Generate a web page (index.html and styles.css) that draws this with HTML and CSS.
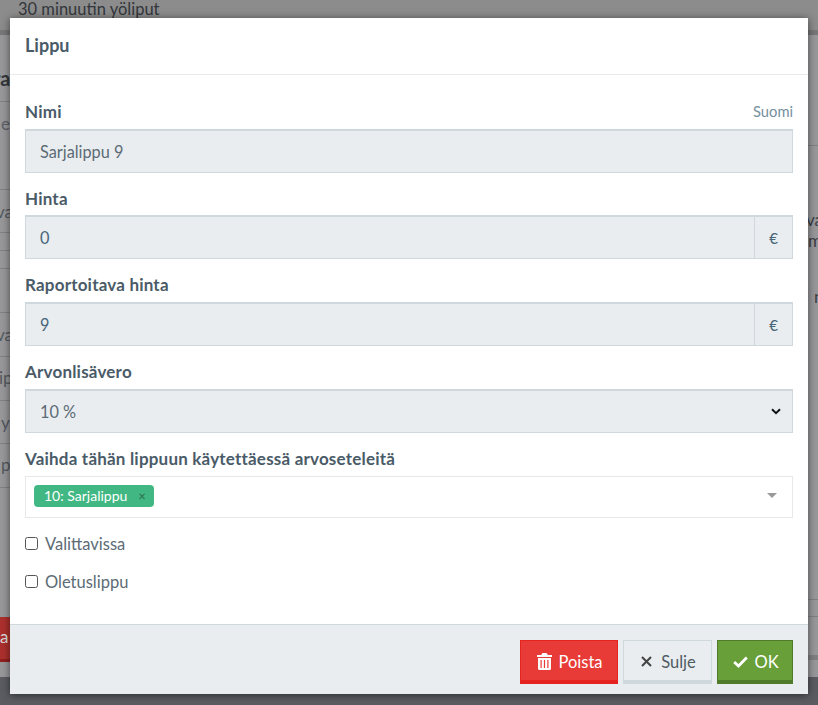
FILE: index.html
```html
<!DOCTYPE html>
<html lang="fi">
<head>
<meta charset="utf-8">
<title>Lippu</title>
<link rel="stylesheet" href="styles.css">
</head>
<body>
<div class="page">
  <div class="page-top">30 minuutin yöliput</div>
  <div class="page-sections">
    <div class="page-col">
      <div class="bg-row bg-h">ra</div>
      <div class="bg-row bg-e">e</div>
      <div class="bg-row bg-a">va</div>
      <div class="bg-row bg-b"></div>
      <div class="bg-row bg-c"></div>
      <div class="bg-row bg-g"></div>
      <div class="bg-row bg-a2">va</div>
      <div class="bg-row bg-p">ip</div>
      <div class="bg-row bg-y">y</div>
      <div class="bg-row bg-p2">p</div>
      <div class="bg-row bg-d"></div>
      <div class="bg-btn">a</div>
    </div>
    <div class="page-right">
      <div class="bg-r1"></div>
      <div class="bg-r2">
        <div class="bg-ra">va</div>
        <div class="bg-rm">m</div>
        <div class="bg-rn">n</div>
      </div>
      <div class="bg-r3"></div>
      <div class="bg-r4"></div>
    </div>
  </div>
</div>

<div class="modal">
  <div class="modal-header">Lippu</div>
  <div class="modal-body">
    <div class="field">
      <div class="label-row">
        <label class="label">Nimi</label>
        <span class="lang">Suomi</span>
      </div>
      <div class="input">Sarjalippu 9</div>
    </div>
    <div class="field">
      <label class="label">Hinta</label>
      <div class="input-group">
        <div class="input grow num">0</div>
        <div class="addon">€</div>
      </div>
    </div>
    <div class="field">
      <label class="label">Raportoitava hinta</label>
      <div class="input-group">
        <div class="input grow num">9</div>
        <div class="addon">€</div>
      </div>
    </div>
    <div class="field">
      <label class="label">Arvonlisävero</label>
      <div class="input select">
        <span>10 %</span>
        <svg class="chev" width="10" height="7" viewBox="0 0 10 7"><path d="M1 1.200 5 5.200 9 1.200" fill="none" stroke="#111" stroke-width="2"/></svg>
      </div>
    </div>
    <div class="field field-multi">
      <label class="label">Vaihda tähän lippuun käytettäessä arvoseteleitä</label>
      <div class="multi">
        <span class="tag">10: Sarjalippu<span class="tag-x">×</span></span>
        <span class="caret"></span>
      </div>
    </div>
    <label class="check"><span class="box"></span>Valittavissa</label>
    <label class="check"><span class="box"></span>Oletuslippu</label>
  </div>
  <div class="modal-footer">
    <button class="btn btn-red">
      <svg class="ico" width="15" height="17" viewBox="0 0 15 17"><path fill="#fff" fill-rule="evenodd" d="M5 0.500Q5.300 0 6 0h3q.7 0 1 .5L10.800 2H15v2H0V2h4.200zM1 5h13v10.500q0 1.500-1.500 1.500h-10Q1 17 1 15.500zM3.500 7v8h1.200V7zM6.900 7v8h1.200V7zM10.300 7v8h1.200V7z"/></svg>Poista
    </button>
    <button class="btn btn-light">
      <svg class="ico ico-x" width="11" height="11" viewBox="0 0 11 11"><path d="M1 1 10 10M10 1 1 10" stroke="#444" stroke-width="2" fill="none"/></svg>Sulje
    </button>
    <button class="btn btn-green">
      <svg class="ico" width="15" height="12" viewBox="0 0 15 12"><path d="M1.200 6 5.500 10 13.800 1.500" stroke="#fff" stroke-width="2.800" fill="none"/></svg>OK
    </button>
  </div>
</div>
</body>
</html>
```

FILE: styles.css
```css
* { box-sizing: border-box; }
html, body { margin: 0; height: 100%; }
body {
  width: 818px;
  height: 705px;
  overflow: hidden;
  position: relative;
  background: #5b5c62;
  font-family: "Lato", "Open Sans", sans-serif;
  color: #4a5b68;
}

/* dimmed page behind the dialog */
.page { height: 677px; display: flex; flex-direction: column; background: #8e8f92; color: #3a3e44; }
.page-top { height: 35px; padding-left: 18px; font-size: 16.500px; line-height: 18px; background: #8c8c8d; border-bottom: 5px solid #767779; color: #33373b; }
.page-sections { display: flex; justify-content: space-between; flex: 1; background: #98989b; }
.page-col { width: 40px; white-space: nowrap; }
.bg-row { border-bottom: 1px solid #808184; font-size: 17px; line-height: 20px; color: #54585e; text-indent: -4px; }
.bg-h { height: 67px; padding-top: 33px; font-weight: 700; font-size: 20px; color: #33373c; text-indent: -7px; }
.bg-e { height: 88px; padding-top: 12px; text-indent: 1px; color: #5c6066; }
.bg-a { height: 43px; padding-top: 12px; }
.bg-b { height: 18px; }
.bg-c { height: 18px; }
.bg-g { height: 44px; }
.bg-a2 { height: 44px; padding-top: 12px; }
.bg-p { height: 44px; padding-top: 11px; text-indent: -1px; }
.bg-y { height: 43px; padding-top: 12px; text-indent: 1px; }
.bg-p2 { height: 44px; padding-top: 11px; text-indent: 1px; }
.bg-d { height: 129px; border-bottom: 0; }
.bg-btn { height: 45px; background: #ac302d; border-bottom: 3px solid #91201e; color: #ddd; font-size: 17px; line-height: 40px; }
.page-right { width: 18px; font-size: 17px; color: #3a3e44; line-height: 20px; white-space: nowrap; }
.bg-r1 { height: 111px; border-bottom: 1px solid #808184; }
.bg-r2 { height: 454px; padding: 64px 0 0 6px; border-bottom: 1px solid #808184; }
.bg-r3 { height: 17px; border-bottom: 1px solid #808184; }
.bg-r4 { height: 43px; border-bottom: 5px solid #808184; }
.bg-ra, .bg-rm { height: 21px; }
.bg-rm { margin-left: 2px; }
.bg-rn { margin-top: 35px; margin-left: 8px; }

/* dialog */
.modal {
  position: absolute;
  left: 10px;
  top: 18px;
  width: 798px;
  height: 676px;
  display: flex;
  flex-direction: column;
  background: #fff;
  box-shadow: 0 1px 8px rgba(0, 0, 0, .55);
}
.modal-header {
  height: 57px;
  padding: 17px 15px 0;
  border-bottom: 1px solid #e8eaec;
  font-size: 18px;
  line-height: 21px;
  font-weight: 700;
  color: #4a5b68;
}
.modal-body { flex: 1; padding: 27.050px 15px 0; }
.field { margin-bottom: 16px; }
.field-multi { margin-bottom: 15.100px; }
.field-multi .label { margin-bottom: 7px; }
.label-row { display: flex; justify-content: space-between; align-items: flex-start; }
.label { display: block; height: 20px; margin-bottom: 6.700px; font-size: 17px; letter-spacing: .2px; line-height: 20px; font-weight: 700; color: #4a5b68; }
.lang { font-size: 14.700px; line-height: 18px; color: #7590a0; }
.input {
  height: 44px;
  padding: 0 14px;
  display: flex;
  align-items: center;
  background: #e9edf0;
  border: 1px solid #cfd8dc;
  border-top-width: 2px;
  font-size: 16.300px;
  color: #5c6b75;
}
.input-group { display: flex; }
.grow { flex: 1; }
.num { color: #47667a; }
.addon {
  width: 38px;
  height: 44px;
  display: flex;
  align-items: center;
  justify-content: center;
  background: #e9edf0;
  border: 1px solid #cfd8dc;
  border-left: 0;
  border-top-width: 2px;
  font-size: 15px;
  color: #47667a;
}
.select { justify-content: space-between; padding-right: 11px; }
.multi {
  height: 42px;
  padding: 8px;
  display: flex;
  align-items: flex-start;
  justify-content: space-between;
  border: 1px solid #e6e8ea;
}
.tag {
  height: 22px;
  padding: 0 8px 0 10px;
  display: inline-flex;
  align-items: center;
  background: #41b883;
  border-radius: 4px;
  color: #fff;
  font-size: 14px;
}
.tag-x { margin-left: 11px; color: #2d6d50; font-size: 13px; }
.caret {
  margin: 8px 7px 0 0;
  width: 0;
  height: 0;
  border-left: 5px solid transparent;
  border-right: 5px solid transparent;
  border-top: 5px solid #999;
}
.check { display: flex; align-items: center; height: 22px; margin-bottom: 16px; font-size: 16.500px; color: #5c6b75; }
.box { width: 13px; height: 13px; margin-right: 7px; border: 1px solid #555; border-radius: 2.500px; background: #fff; }
.modal-footer {
  height: 70px;
  padding: 15px 15px 0;
  display: flex;
  justify-content: flex-end;
  gap: 5px;
  background: #e9edf0;
  border-top: 1px solid #cfd8dc;
}
.btn {
  height: 44px;
  display: inline-flex;
  align-items: center;
  justify-content: center;
  border: 1px solid;
  border-bottom-width: 4px;
  font-family: inherit;
  font-size: 16.500px;
  padding: 2px 0 0 2px;
}
.ico { margin-right: 6px; }
.ico-x { margin-right: 9px; }
.btn-red { width: 98px; background: #e83b38; border-color: #e5231f; color: #fff; }
.btn-light { width: 89px; background: #e9edf0; border-color: #cfd8dc; color: #4f5b63; }
.btn-green { width: 76px; background: #689f38; border-color: #507b2b; color: #fff; }
```
